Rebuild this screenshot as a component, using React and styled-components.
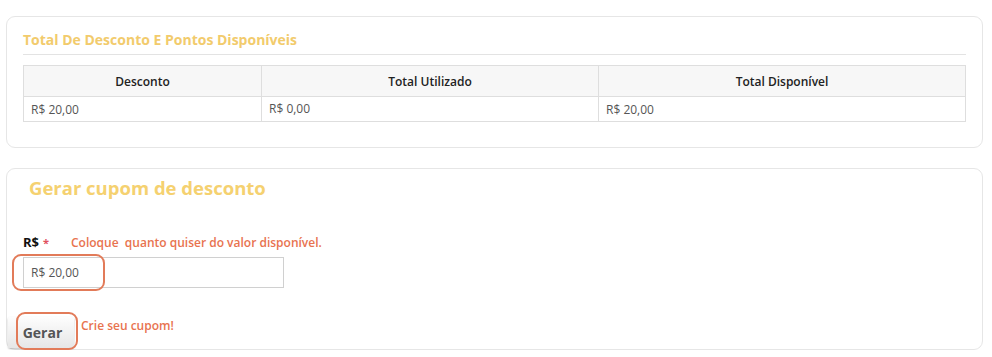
import React from "react";
import styled, { createGlobalStyle } from "styled-components";

const Global = createGlobalStyle`
  html, body { margin: 0; padding: 0; background: #fff; }
  body { font-family: "Open Sans", "Noto Sans", sans-serif; color: #333; }
  * { box-sizing: border-box; }
`;

const Page = styled.div`
  padding: 16px 9px 0 6px;
  display: flex;
  flex-direction: column;
  gap: 20px;
`;

const Card = styled.section`
  border: 1px solid #e6e6e6;
  border-radius: 9px;
  background: #fff;
  padding: ${(p) => p.$pad};
  min-height: ${(p) => p.$minH || "auto"};
`;

const SmallTitle = styled.h3`
  margin: 0;
  font-size: 14px;
  font-weight: 700;
  color: #f2cb6c;
  padding: 0 0 4px;
  border-bottom: 1px solid #e3e3e3;
  line-height: 21px;
`;

const Table = styled.table`
  width: 100%;
  margin-top: 10px;
  border-collapse: collapse;
  font-size: 12px;
`;

const Th = styled.th`
  background: #f7f7f7;
  border: 1px solid #dedede;
  height: 31px;
  font-weight: 600;
  color: #222;
  text-align: center;
  width: ${(p) => p.$w};
`;

const Td = styled.td`
  border: 1px solid #dedede;
  height: 25px;
  padding: 0 7px;
  color: #555;
  vertical-align: ${(p) => (p.$top ? "top" : "middle")};
  padding-top: ${(p) => (p.$top ? "3px" : "0")};
`;

const BigTitle = styled.h2`
  margin: 0 0 0 6px;
  font-size: 18.5px;
  font-weight: 700;
  color: #f5d170;
  line-height: 24px;
`;

const LabelRow = styled.div`
  margin-top: 33px;
  display: flex;
  align-items: baseline;
`;

const Label = styled.span`
  font-size: 13px;
  font-weight: 700;
  color: #111;
  width: 48px;
`;

const Req = styled.span`
  color: #e0505e;
  font-size: 11px;
  margin-left: 4px;
`;

const Hint = styled.span`
  font-size: 12px;
  font-weight: 600;
  color: #e8734f;
  white-space: pre;
`;

const InputWrap = styled.div`
  position: relative;
  width: 261px;
  margin-top: 6px;
`;

const Input = styled.input`
  display: block;
  width: 261px;
  height: 31px;
  border: 1px solid #d0d0d0;
  padding: 0 7px;
  font-family: inherit;
  font-size: 12px;
  color: #555;
  outline: none;
`;

const Ring = styled.div`
  position: absolute;
  left: ${(p) => p.$l}px;
  top: ${(p) => p.$t}px;
  width: ${(p) => p.$w}px;
  height: ${(p) => p.$h}px;
  border: 2.5px solid #e27b59;
  border-radius: 9px;
  pointer-events: none;
`;

const ButtonRow = styled.div`
  margin: 29px 0 0 -15px;
  display: flex;
  align-items: flex-start;
  gap: 7px;
`;

const ButtonWrap = styled.div`
  position: relative;
`;

const Button = styled.button`
  display: block;
  width: 66px;
  height: 31px;
  border: none;
  border-radius: 2px;
  background: linear-gradient(#fdfdfd, #e6e6e6);
  box-shadow: 0 1px 2px rgba(0, 0, 0, 0.25);
  font-family: inherit;
  font-size: 14px;
  font-weight: 700;
  color: #555;
  padding: 0 0 0 3px;
  text-align: center;
`;

const ButtonHint = styled(Hint)`
  margin-top: 0;
`;

export default function App() {
  return (
    <>
      <Global />
      <Page>
        <Card $pad="12px 16px 25px">
          <SmallTitle>Total De Desconto E Pontos Disponíveis</SmallTitle>
          <Table>
            <thead>
              <tr>
                <Th $w="238px">Desconto</Th>
                <Th $w="337px">Total Utilizado</Th>
                <Th>Total Disponível</Th>
              </tr>
            </thead>
            <tbody>
              <tr>
                <Td>R$ 20,00</Td>
                <Td $top>R$ 0,00</Td>
                <Td>R$ 20,00</Td>
              </tr>
            </tbody>
          </Table>
        </Card>
        <Card $pad="7px 16px 0" $minH="182px">
          <BigTitle>Gerar cupom de desconto</BigTitle>
          <LabelRow>
            <Label>
              R$<Req>*</Req>
            </Label>
            <Hint>Coloque  quanto quiser do valor disponível.</Hint>
          </LabelRow>
          <InputWrap>
            <Input defaultValue="R$ 20,00" />
            <Ring $l={-11} $t={-3} $w={93} $h={37} />
          </InputWrap>
          <ButtonRow>
            <ButtonWrap>
              <Button>Gerar</Button>
              <Ring $l={8} $t={-5} $w={62} $h={38} />
            </ButtonWrap>
            <ButtonHint>Crie seu cupom!</ButtonHint>
          </ButtonRow>
        </Card>
      </Page>
    </>
  );
}
